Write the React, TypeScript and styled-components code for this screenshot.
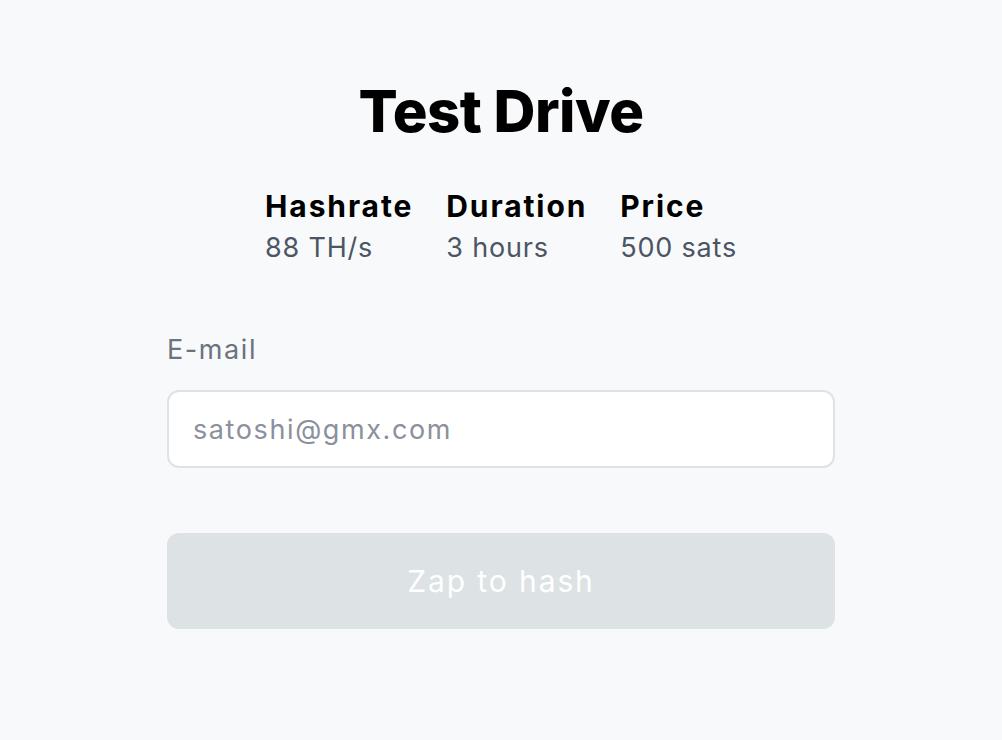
import styled, { createGlobalStyle } from "styled-components";

const GlobalStyle = createGlobalStyle`
  html, body {
    margin: 0;
    padding: 0;
    background: #f8f9fb;
  }
  body {
    font-family: Inter, "Noto Sans", "Liberation Sans", sans-serif;
  }
`;

const Page = styled.div`
  min-height: 740px;
  display: flex;
  flex-direction: column;
  align-items: center;
  padding-top: 76px;
  box-sizing: border-box;
`;

const Title = styled.h1`
  margin: 0;
  font-size: 58px;
  font-weight: 800;
  line-height: 70px;
  color: #000;
  letter-spacing: -0.5px;
`;

const Stats = styled.div`
  display: flex;
  gap: 33px;
  margin-top: 40px;
`;

const Stat = styled.div`
  display: flex;
  flex-direction: column;
`;

const StatName = styled.div`
  font-size: 30px;
  font-weight: 700;
  line-height: 40px;
  letter-spacing: 1.9px;
  color: #000;
`;

const StatValue = styled.div`
  font-size: 27px;
  line-height: 44px;
  letter-spacing: 0.8px;
  color: #4b5563;
`;

const Form = styled.form`
  width: 668px;
  margin-top: 62px;
  display: flex;
  flex-direction: column;
`;

const Label = styled.label`
  font-size: 27px;
  line-height: 36px;
  letter-spacing: 1.6px;
  color: #6b7280;
  margin-bottom: 22px;
`;

const Input = styled.input`
  height: 78px;
  box-sizing: border-box;
  border: 2px solid #dfe2e6;
  border-radius: 12px;
  background: #fff;
  padding: 0 24px;
  font-family: inherit;
  font-size: 27px;
  letter-spacing: 1.6px;
  color: #111;
  outline: none;
  &::placeholder {
    color: #8b909c;
  }
`;

const Submit = styled.button`
  margin-top: 65px;
  height: 96px;
  border: none;
  border-radius: 12px;
  background: #dde2e5;
  color: #fff;
  font-family: inherit;
  font-size: 30px;
  font-weight: 400;
  letter-spacing: 1.9px;
  cursor: not-allowed;
`;

const stats = [
  { name: "Hashrate", value: "88 TH/s" },
  { name: "Duration", value: "3 hours" },
  { name: "Price", value: "500 sats" },
];

export default function App() {
  return (
    <>
      <GlobalStyle />
      <Page>
        <Title>Test Drive</Title>
        <Stats>
          {stats.map((s) => (
            <Stat key={s.name}>
              <StatName>{s.name}</StatName>
              <StatValue>{s.value}</StatValue>
            </Stat>
          ))}
        </Stats>
        <Form onSubmit={(e) => e.preventDefault()}>
          <Label htmlFor="email">E-mail</Label>
          <Input id="email" type="email" placeholder="satoshi@gmx.com" />
          <Submit type="submit" disabled>
            Zap to hash
          </Submit>
        </Form>
      </Page>
    </>
  );
}
